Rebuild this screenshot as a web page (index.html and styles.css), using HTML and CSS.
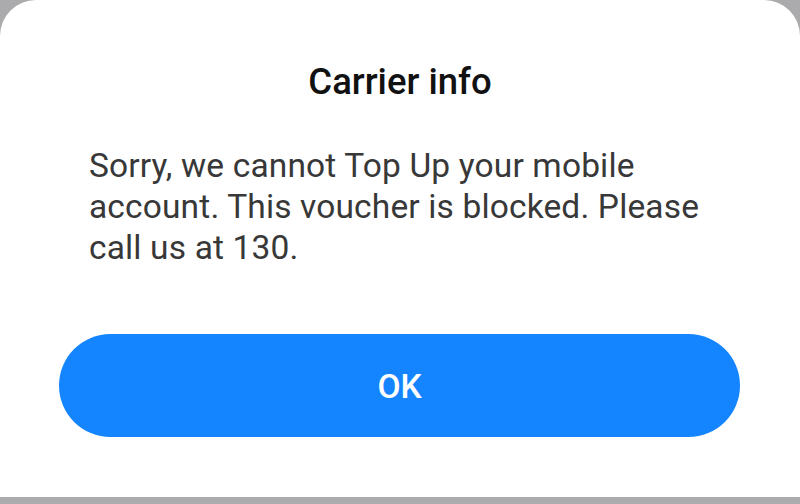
FILE: index.html
```html
<!DOCTYPE html>
<html>
<head>
<meta charset="utf-8">
<link rel="stylesheet" href="styles.css">
</head>
<body>
<div class="dialog">
  <h1 class="title">Carrier info</h1>
  <p class="message">Sorry, we cannot Top Up your mobile account. This voucher is blocked. Please call us at 130.</p>
  <div class="actions">
    <button class="ok">OK</button>
  </div>
</div>
</body>
</html>
```

FILE: styles.css
```css
html, body {
  margin: 0;
  padding: 0;
}
body {
  width: 800px;
  height: 504px;
  background: #ababad;
  font-family: Roboto, "Noto Sans", sans-serif;
  overflow: hidden;
}
.dialog {
  height: 497px;
  box-sizing: border-box;
  background: #ffffff;
  border-radius: 36px 36px 0 0;
  padding-top: 60px;
  display: flex;
  flex-direction: column;
}
.title {
  margin: 0;
  font-size: 36.5px;
  line-height: 44px;
  font-weight: 500;
  color: #111111;
  text-align: center;
}
.message {
  margin: 41px 0 0;
  padding: 0 70px 0 89px;
  font-size: 33.5px;
  letter-spacing: 0.15px;
  line-height: 41px;
  font-weight: 400;
  color: #383838;
}
.actions {
  margin-top: 66px;
  padding: 0 60px 0 59px;
}
.ok {
  display: block;
  width: 100%;
  height: 103px;
  border: none;
  border-radius: 52px;
  background: #1485fe;
  color: #ffffff;
  font-family: Roboto, "Noto Sans", sans-serif;
  font-size: 33.5px;
  font-weight: 500;
  padding: 2px 0 0;
}
```
